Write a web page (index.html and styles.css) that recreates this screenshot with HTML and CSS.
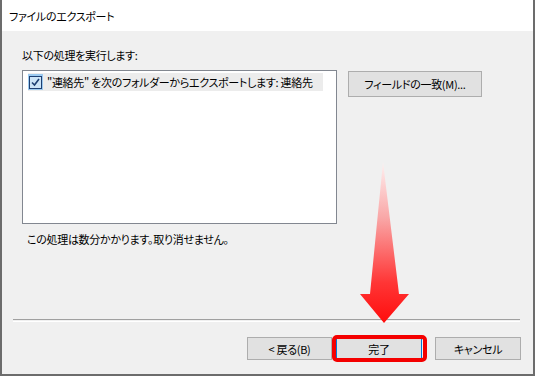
FILE: index.html
```html
<!DOCTYPE html>
<html lang="ja">

<head>
  <meta charset="UTF-8">
  <meta name="viewport" content="width=device-width, initial-scale=1.0">
  <title>ファイルのエクスポート</title>
  <link rel="stylesheet" href="styles.css">
</head>

<body>
  <div class="window">
    <div class="titlebar">ファイルのエクスポート</div>

    <div class="content">
      <div class="label">以下の処理を実行します:</div>

      <div class="row">
        <div class="listbox">
          <div class="item">
            <!-- casilla marcada -->
            <svg class="check" width="15" height="16" viewBox="0 0 15 16">
              <rect x="0" y="0" width="15" height="16" fill="#9ccaf0" />
              <rect x="1.5" y="2.5" width="12" height="12" fill="#cce4f7" stroke="#1d3f72" stroke-width="1" />
              <path d="M4 8.5 L6.5 11 L11 5" fill="none" stroke="#1d3f72" stroke-width="1.6" />
            </svg>
            <span class="item-text">"連絡先" を次のフォルダーからエクスポートします: 連絡先</span>
          </div>
        </div>
        <button class="btn btn-fields">フィールドの一致(M)...</button>
      </div>

      <div class="note">この処理は数分かかります。取り消せません。</div>
    </div>

    <div class="separator"></div>

    <div class="buttons">
      <button class="btn">&lt;&nbsp;戻る(B)</button>
      <span class="focus-wrap">
        <button class="btn btn-default">完了</button>
        <span class="red-box"></span>
      </span>
      <button class="btn btn-cancel">キャンセル</button>
    </div>

    <!-- flecha roja sobre el diálogo -->
    <svg class="arrow" width="535" height="376" viewBox="0 0 535 376">
      <defs>
        <linearGradient id="fade" x1="0" y1="162" x2="0" y2="323" gradientUnits="userSpaceOnUse">
          <stop offset="0" stop-color="#fff0f0" />
          <stop offset="0.35" stop-color="#f9a6a6" />
          <stop offset="0.75" stop-color="#ff3535" />
          <stop offset="1" stop-color="#ff0d0d" />
        </linearGradient>
      </defs>
      <polygon points="383,162 370,294 360,294 384,323 409,294 399,294" fill="url(#fade)" />
    </svg>
  </div>
</body>

</html>
```

FILE: styles.css
```css
body {
  margin: 0;
  font-family: "Noto Sans CJK JP", "Noto Sans", sans-serif;
  font-size: 11px;
  letter-spacing: -0.3px;
  color: #000;
  font-feature-settings: "palt";
}

.window {
  position: relative;
  width: 535px;
  height: 376px;
  box-sizing: border-box;
  border: 2px solid #6c6c6c;
  border-top: none;
  background-color: #f0f0f0;
  display: flex;
  flex-direction: column;
}

.titlebar {
  height: 31px;
  background-color: #fff;
  display: flex;
  align-items: center;
  padding-left: 7px;
  line-height: 16px;
  flex-shrink: 0;
}

.content {
  padding: 16px 0 0 20px;
  height: 274px;
  box-sizing: border-box;
}

.label {
  line-height: 16px;
}

.row {
  display: flex;
  align-items: flex-start;
  margin-top: 7px;
}

.listbox {
  width: 315px;
  height: 154px;
  box-sizing: border-box;
  border: 1px solid #828790;
  background-color: #fff;
  padding: 2px 13px 0 5px;
}

.item {
  display: flex;
  align-items: center;
  height: 18px;
  background-color: #ececec;
}

.check {
  flex-shrink: 0;
  margin-right: 4px;
}

.item-text {
  line-height: 16px;
  white-space: nowrap;
}

.btn {
  font-family: inherit;
  font-size: 11px;
  letter-spacing: -0.3px;
  font-feature-settings: "palt";
  color: #000;
  background-color: #e1e1e1;
  border: 1px solid #adadad;
  padding: 0;
  height: 23px;
  width: 85px;
  cursor: pointer;
}

.btn-fields {
  width: 134px;
  height: 26px;
  margin: 1px 0 0 11px;
}

.note {
  margin-top: 7px;
  padding-left: 5px;
  line-height: 16px;
}

.separator {
  margin: 14px 13px 0 11px;
  height: 1px;
  border-top: 1px solid #a0a0a0;
  border-bottom: 1px solid #fff;
}

.buttons {
  display: flex;
  margin-top: 15px;
  padding-left: 245px;
}

.focus-wrap {
  position: relative;
  margin-left: 4px;
  display: flex;
}

.btn-default {
  width: 86px;
  border-color: #0078d7;
}

/* recuadro rojo de resaltado */
.red-box {
  position: absolute;
  left: -4px;
  right: -5px;
  top: -2px;
  bottom: -2px;
  border: 4px solid #f40000;
  border-radius: 5px;
  pointer-events: none;
}

.btn-cancel {
  width: 86px;
  margin-left: 13px;
}

.arrow {
  position: absolute;
  left: -2px;
  top: 0;
  pointer-events: none;
}
```
